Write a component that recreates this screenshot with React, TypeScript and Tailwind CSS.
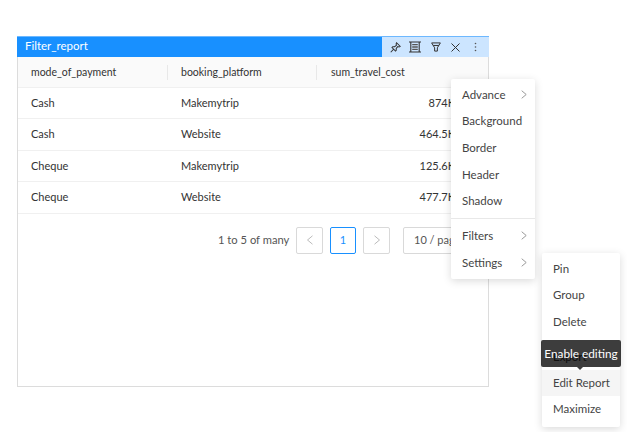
import React from "react";

const F = "font-['Lato','Liberation_Sans',sans-serif]";

const rows = [
  ["Cash", "Makemytrip", "874K"],
  ["Cash", "Website", "464.5K"],
  ["Cheque", "Makemytrip", "125.6K"],
  ["Cheque", "Website", "477.7K"],
];

function Chevron({ dir = "right", className = "" }: { dir?: "left" | "right"; className?: string }) {
  return (
    <svg width="8" height="10" viewBox="0 0 8 10" fill="none" stroke="currentColor" strokeWidth="1" className={className}>
      {dir === "right" ? <path d="M1.5 0.8 L6.5 5 L1.5 9.2" /> : <path d="M6.5 0.8 L1.5 5 L6.5 9.2" />}
    </svg>
  );
}

function MenuItem({ label, arrow }: { label: string; arrow?: boolean }) {
  return (
    <div className="h-[26.7px] pl-[11px] pr-[8px] flex items-center justify-between text-[11.5px] text-[#444]">
      <span>{label}</span>
      {arrow && (
        <svg width="6" height="9" viewBox="0 0 6 9" fill="none" stroke="#999" strokeWidth="1">
          <path d="M0.7 0.7 L5.2 4.5 L0.7 8.3" />
        </svg>
      )}
    </div>
  );
}

export default function App() {
  return (
    <div className={`relative w-[627px] h-[432px] bg-white overflow-hidden pt-[36px] pl-[17px] ${F}`}>
      <div className="w-[472px] h-[351px] border border-t-0 border-[#dcdcdc] flex flex-col">
        <div className="h-[21px] -mx-px flex bg-[#1890ff] border-t border-[#6db8ff]">
          <div className="flex-1 pl-[8px] pb-[2px] flex items-center text-white text-[11.5px]">Filter_report</div>
          <div className="w-[107px] bg-[#cce5ff] flex items-center text-[#444]">
            <svg width="11" height="11" viewBox="0 0 12 12" fill="none" stroke="#333" strokeWidth="1.1" className="ml-[8px]">
              <path d="M7.2 0.8 L11.2 4.8 L9.9 5.4 L8.4 5 L6.8 7 L6.8 9 L6 9.8 L2.2 6 L3 5.2 L5 5.2 L7 3.6 L6.7 2 Z M4 7.8 L0.8 11.2" />
            </svg>
            <svg width="12" height="12" viewBox="0 0 12 12" fill="none" stroke="#333" strokeWidth="1.1" className="ml-[8px]">
              <path d="M0 1 H12 M0 11 H12 M1.8 1 V11 M10.2 1 V11" />
              <path d="M3.2 3.6 H8.8 M3.2 6 H8.8 M3.2 8.4 H8.8" strokeWidth="1.4" stroke="#555" />
            </svg>
            <svg width="10" height="10" viewBox="0 0 11 11" fill="none" stroke="#333" strokeWidth="1.1" className="ml-[10px]">
              <path d="M0.7 1 H10.3 L7 6.4 V10 H4 V6.4 Z M2.5 3.8 H8.5" />
            </svg>
            <svg width="9" height="9" viewBox="0 0 9 9" fill="none" stroke="#333" strokeWidth="1" className="ml-[10px]">
              <path d="M0.5 0.5 L8.5 8.5 M8.5 0.5 L0.5 8.5" />
            </svg>
            <svg width="3" height="10" viewBox="0 0 3 10" fill="#555" className="ml-[14px]">
              <circle cx="1.5" cy="1.5" r="0.8" />
              <circle cx="1.5" cy="5" r="0.8" />
              <circle cx="1.5" cy="8.5" r="0.8" />
            </svg>
          </div>
        </div>
        <div className="h-[31px] pt-[1px] bg-[#fafafa] grid grid-cols-[150px_149px_1fr] items-center text-[10.5px] text-[#333] border-b border-[#f0f0f0]">
          <div className="pl-[13px] h-[15px] flex items-center border-r border-[#e8e8e8]">mode_of_payment</div>
          <div className="pl-[13px] h-[15px] flex items-center border-r border-[#e8e8e8]">booking_platform</div>
          <div className="pl-[14px]">sum_travel_cost</div>
        </div>
        {rows.map((r) => (
          <div key={r[0] + r[1]} className="h-[31.4px] grid grid-cols-[150px_149px_1fr] items-center text-[11px] text-[#333] border-b border-[#f0f0f0]">
            <div className="pl-[13px]">{r[0]}</div>
            <div className="pl-[13px]">{r[1]}</div>
            <div className="text-right pr-[33px]">{r[2]}</div>
          </div>
        ))}
        <div className="flex items-center mt-[13px] text-[11px] text-[#555] pl-[200px]">
          <span className="w-[78px] text-[11.2px] whitespace-nowrap">1 to 5 of many</span>
          <div className="w-[27px] h-[27px] border border-[#d9d9d9] rounded-[2px] flex items-center justify-center text-[#bbb]"><Chevron dir="left" /></div>
          <div className="ml-[7px] w-[26px] h-[27px] border border-[#1890ff] rounded-[2px] flex items-center justify-center text-[#1890ff]">1</div>
          <div className="ml-[7px] w-[27px] h-[27px] border border-[#d9d9d9] rounded-[2px] flex items-center justify-center text-[#bbb]"><Chevron /></div>
          <div className="ml-[13px] w-[70px] h-[27px] border border-[#d9d9d9] rounded-[2px] flex items-center pl-[10px] whitespace-nowrap">10 / page</div>
        </div>
      </div>

      <div className="absolute left-[451px] top-[79px] w-[84px] h-[200px] bg-white rounded-[2px] shadow-[0_2px_8px_rgba(0,0,0,0.15)] pt-[2px]">
        <MenuItem label="Advance" arrow />
        <MenuItem label="Background" />
        <MenuItem label="Border" />
        <MenuItem label="Header" />
        <MenuItem label="Shadow" />
        <div className="h-px bg-[#e8e8e8] mt-[4px] mb-[3px]" />
        <MenuItem label="Filters" arrow />
        <MenuItem label="Settings" arrow />
      </div>

      <div className="absolute left-[542px] top-[253px] w-[78px] h-[174px] bg-white rounded-[2px] shadow-[0_2px_8px_rgba(0,0,0,0.15)] pt-[2px]">
        <MenuItem label="Pin" />
        <MenuItem label="Group" />
        <MenuItem label="Delete" />
        <div className="mt-[8px]"><MenuItem label="Export" /></div>
        <div className="bg-[#f5f5f5]"><MenuItem label="Edit Report" /></div>
        <div className="-mt-px"><MenuItem label="Maximize" /></div>
      </div>

      <div className="absolute left-[541px] top-[340px] w-[80px] h-[27px] bg-[rgba(0,0,0,0.76)] rounded-[2px] flex items-center justify-center text-white text-[11.8px] whitespace-nowrap">
        Enable editing
        <div className="absolute left-[36px] bottom-[-3px] w-0 h-0 border-l-[3px] border-r-[3px] border-t-[3px] border-l-transparent border-r-transparent border-t-[#3d3d3d]" />
      </div>
    </div>
  );
}
